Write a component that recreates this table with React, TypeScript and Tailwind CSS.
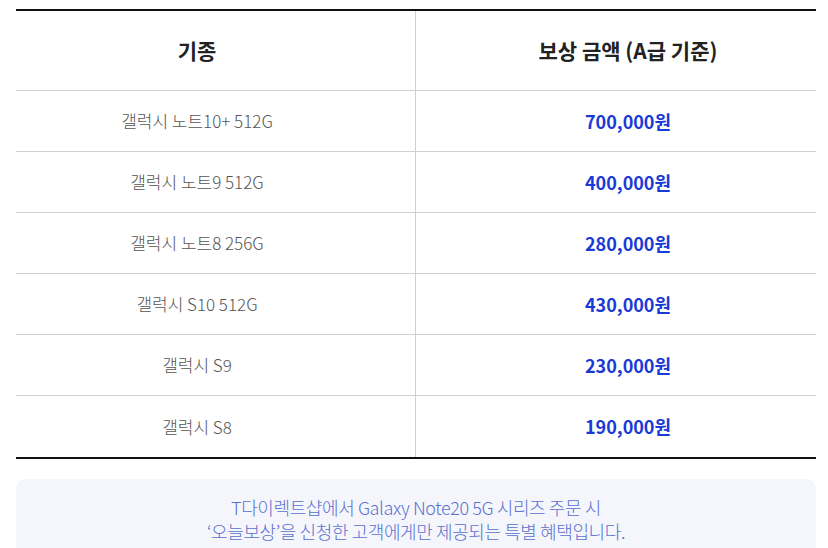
import React from "react";

const rows = [
  { model: "갤럭시 노트10+ 512G", price: "700,000원" },
  { model: "갤럭시 노트9 512G", price: "400,000원" },
  { model: "갤럭시 노트8 256G", price: "280,000원" },
  { model: "갤럭시 S10 512G", price: "430,000원" },
  { model: "갤럭시 S9", price: "230,000원" },
  { model: "갤럭시 S8", price: "190,000원" },
];

const font = { fontFamily: '"Noto Sans CJK KR", "Noto Sans", sans-serif' };

export default function App() {
  return (
    <div className="w-[828px] h-[548px] overflow-hidden bg-white pl-4 pr-3 pt-[9px]" style={font}>
      <div className="border-t-2 border-b-2 border-[#111]">
        <div className="grid grid-cols-2 h-[80px] border-b border-[#d0d0d0]">
          <div className="flex items-center justify-center pr-[37px] border-r border-[#d0d0d0] text-[21px] font-bold text-[#222]">
            기종
          </div>
          <div className="flex items-center justify-center pl-[24px] text-[21px] font-bold text-[#222]">
            보상 금액 (A급 기준)
          </div>
        </div>
        {rows.map((r, i) => (
          <div
            key={r.model}
            className={`grid grid-cols-2 h-[61px] ${i < rows.length - 1 ? "border-b border-[#d0d0d0]" : ""}`}
          >
            <div className="flex items-center justify-center pr-[37px] border-r border-[#d0d0d0] text-[17px] font-light text-[#555]">
              {r.model}
            </div>
            <div className="flex items-center justify-center pl-[24px] text-[18px] font-bold text-[#1a3ad6]">
              {r.price}
            </div>
          </div>
        ))}
      </div>
      <div className="mt-[20px] rounded-[10px] bg-[#f4f6fc] h-[90px] pt-[16px] text-center text-[18px] font-light leading-[24px] text-[#5a6fcf] tracking-[-0.4px]">
        <p>T다이렉트샵에서 Galaxy Note20 5G 시리즈 주문 시</p>
        <p>‘오늘보상’을 신청한 고객에게만 제공되는 특별 혜택입니다.</p>
      </div>
    </div>
  );
}
